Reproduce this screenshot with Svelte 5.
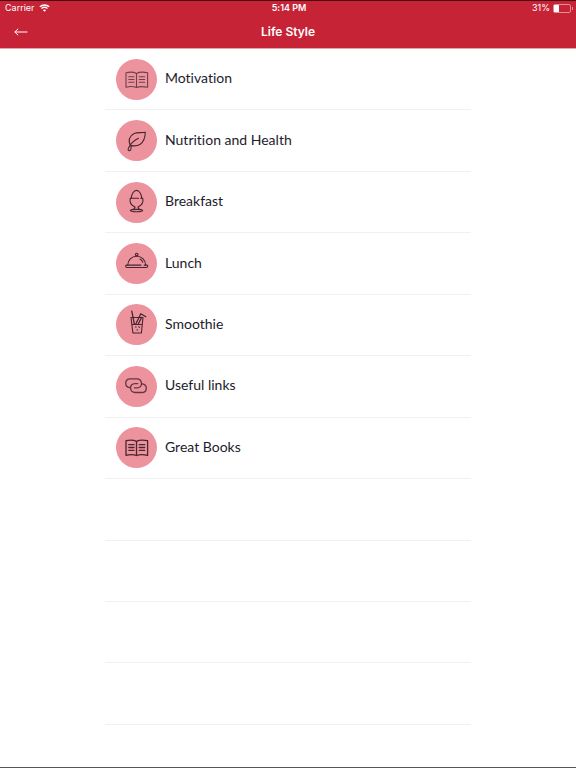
<script>
  const topics = [
    { name: 'Motivation', icon: 'book' },
    { name: 'Nutrition and Health', icon: 'leaf' },
    { name: 'Breakfast', icon: 'egg' },
    { name: 'Lunch', icon: 'cloche' },
    { name: 'Smoothie', icon: 'drink' },
    { name: 'Useful links', icon: 'links' },
    { name: 'Great Books', icon: 'books' }
  ];

  // the list keeps its separators below the last topic
  const emptyRows = 4;

  let battery = 31;
  let selected = $state(null);

  function goBack() {
    history.back();
  }
</script>

<div class="screen">
  <header>
    <div class="status">
      <span class="carrier">
        Carrier
        <svg class="wifi" viewBox="0 0 11 8" aria-hidden="true">
          <path d="M0.8 2.7C3.5 0.4 7.5 0.4 10.2 2.7M2.5 4.5C4.2 3.1 6.8 3.1 8.5 4.5" />
          <path class="solid" d="M3.8 6C4.8 5.2 6.2 5.2 7.2 6L5.5 7.8Z" />
        </svg>
      </span>
      <span class="time">5:14 PM</span>
      <span class="power">
        {battery}%
        <span class="battery"><span class="charge" style="width: {battery}%"></span></span>
      </span>
    </div>
    <nav>
      <button class="back" aria-label="Back" onclick={goBack}>
        <svg viewBox="0 0 14 8" aria-hidden="true">
          <path d="M13.5 4H0.8M4.2 0.8L0.8 4L4.2 7.2" />
        </svg>
      </button>
      <h1>Life Style</h1>
    </nav>
  </header>

  <main>
    <ul>
      {#each topics as topic}
        <li>
          <button class="topic" onclick={() => (selected = topic.name)}>
            <svg class="icon {topic.icon}" viewBox="0 0 41 41" aria-hidden="true">
              {#if topic.icon === 'book' || topic.icon === 'books'}
                <path d="M20.5 14.4C18 13 13 13 10 13.7V28.3C13 27.5 18 27.5 20.5 28.5C23 27.5 28 27.5 31.6 28.3V13.7C28 13 23 13 20.5 14.4V28.5" />
                <path d="M12.8 17.7H18M12.8 20.5H18M12.8 23.3H18M23.2 17.7H28.7M23.2 20.5H28.7M23.2 23.3H28.7" />
              {:else if topic.icon === 'leaf'}
                <path d="M14.8 25.6C11.5 21.2 13.5 15.6 18.2 13.5C21.8 12 25.7 13.2 29.3 12.2C29.2 17.3 27.8 21.7 24.2 24.2C21.4 26 18 26 15.6 25.6" />
                <path d="M22.5 18.3C18.5 20.2 14.6 23.8 12.5 28C11.6 29.8 12.5 30.9 14 30.5C15.5 30 14.5 27.8 15.6 25.6" />
              {:else if topic.icon === 'egg'}
                <path d="M15.2 16.1C15.5 12.2 17.8 8.4 20.5 8.4C23.2 8.4 25.5 12.2 25.8 16.1" />
                <path d="M14.3 16.2H22.5M24.7 16.2H26.7M14.3 16.2C13.3 20.2 15.5 23.5 19 25C19 27 17.8 27.4 15.8 27.8M26.7 16.2C27.7 20.2 25.5 23.5 22 25C22 27 23.2 27.4 25.2 27.8" />
                <ellipse cx="20.5" cy="28.6" rx="6.2" ry="1.2" />
              {:else if topic.icon === 'cloche'}
                <circle cx="20.7" cy="11.5" r="1.3" />
                <path d="M11.8 22C12 16.8 15.8 13.3 20.7 13.3S29.4 16.8 29.6 22" />
                <path d="M25 22.1H10.5C9.3 22.1 9.4 24.5 11 24.5H30.4C32 24.5 32.1 22.1 30.9 22.1H28.2M24 16.1C25.4 16.9 26.3 18 26.8 19.2" />
              {:else if topic.icon === 'drink'}
                <path d="M15 13.5H27L25.4 29H16.9ZM15.8 20.5H26.2" />
                <path class="straw" d="M15.8 7.2L18.3 19.8M19.8 20L24.8 9.8L29.8 12.7M22.4 19.8L25.6 13.5" />
                <path d="M19.4 23H20.2M22.9 22.7L23.4 23.4M21 25.8L21.6 26" />
              {:else}
                <path d="M13.8 21.6C8.2 21 8.4 12.9 14.2 12.9H20.8C26.4 12.9 27.6 21.8 21 21.8H18.4" />
                <path d="M26.2 17.9C31.8 18.5 31.6 26.5 25.8 26.5H19.2C13.6 26.5 12.4 17.6 19 17.6H21.8" />
              {/if}
            </svg>
            <span class="label">{topic.name}</span>
          </button>
        </li>
      {/each}
      {#each Array(emptyRows) as _}
        <li aria-hidden="true"></li>
      {/each}
    </ul>
  </main>
</div>

<style>
  :global(body) {
    margin: 0;
    background: #fff;
  }

  .screen {
    box-sizing: border-box;
    min-height: 100vh;
    border-bottom: 1px solid #555;
    font-family: Lato, 'Liberation Sans', sans-serif;
    font-variant-ligatures: none;
    color: #1c1c2b;
  }

  header {
    background: #c72336;
    border-top: 1px solid #4d0b14;
    border-bottom: 1px solid #e6a3ab;
    color: #fff;
    font-family: Inter, 'Liberation Sans', sans-serif;
  }

  .status {
    display: grid;
    grid-template-columns: 1fr auto 1fr;
    align-items: center;
    padding: 0 5px;
    font-size: 9px;
    line-height: 14px;
  }

  .carrier,
  .power {
    display: flex;
    align-items: center;
    gap: 4px;
  }

  .power {
    justify-content: flex-end;
    gap: 3px;
  }

  .time {
    padding-left: 2px;
    font-weight: 600;
  }

  .wifi {
    width: 11px;
    height: 8px;
    fill: none;
    stroke: #fff;
    stroke-width: 1.4;
  }

  .wifi .solid {
    fill: #fff;
    stroke: none;
  }

  .battery {
    position: relative;
    box-sizing: border-box;
    width: 18px;
    height: 9px;
    border: 1px solid #e08f99;
    border-radius: 2px;
  }

  .battery::after {
    content: '';
    position: absolute;
    top: 2px;
    right: -3px;
    width: 1px;
    height: 3px;
    background: #e08f99;
  }

  .charge {
    display: block;
    height: 100%;
    background: #fff;
  }

  nav {
    display: grid;
    grid-template-columns: 1fr auto 1fr;
    align-items: center;
    height: 33px;
    padding: 0 8px;
  }

  h1 {
    margin: 0;
    font-size: 12px;
    font-weight: 600;
    line-height: 16px;
  }

  button {
    border: 0;
    background: none;
    color: inherit;
    font: inherit;
    text-align: left;
    cursor: pointer;
  }

  .back {
    display: flex;
    justify-self: start;
    padding: 8px 6px;
  }

  .back svg {
    width: 14px;
    height: 8px;
    fill: none;
    stroke: #fff;
    stroke-width: 1;
  }

  ul {
    display: grid;
    grid-auto-rows: minmax(61px, 8vh);
    max-width: 366px;
    margin: 0 auto;
    padding: 0;
    list-style: none;
  }

  li {
    display: flex;
    border-bottom: 1px solid #f1f1f1;
  }

  .topic {
    display: flex;
    flex: 1;
    align-items: center;
    gap: 8px;
    padding: 0 11px;
    font-size: 14px;
    line-height: 20px;
  }

  .label {
    padding-bottom: 2px;
  }

  .icon {
    width: 41px;
    height: 41px;
    border-radius: 50%;
    background: #ec939d;
    fill: none;
    stroke: #47262f;
    stroke-width: 1.1;
    stroke-linecap: round;
    stroke-linejoin: round;
  }

  .straw {
    stroke-width: 1.3;
  }

  .book {
    stroke: #6f414d;
  }

  .books {
    stroke-width: 1.3;
  }

  .links {
    stroke: #633640;
    stroke-width: 1.3;
  }
</style>
